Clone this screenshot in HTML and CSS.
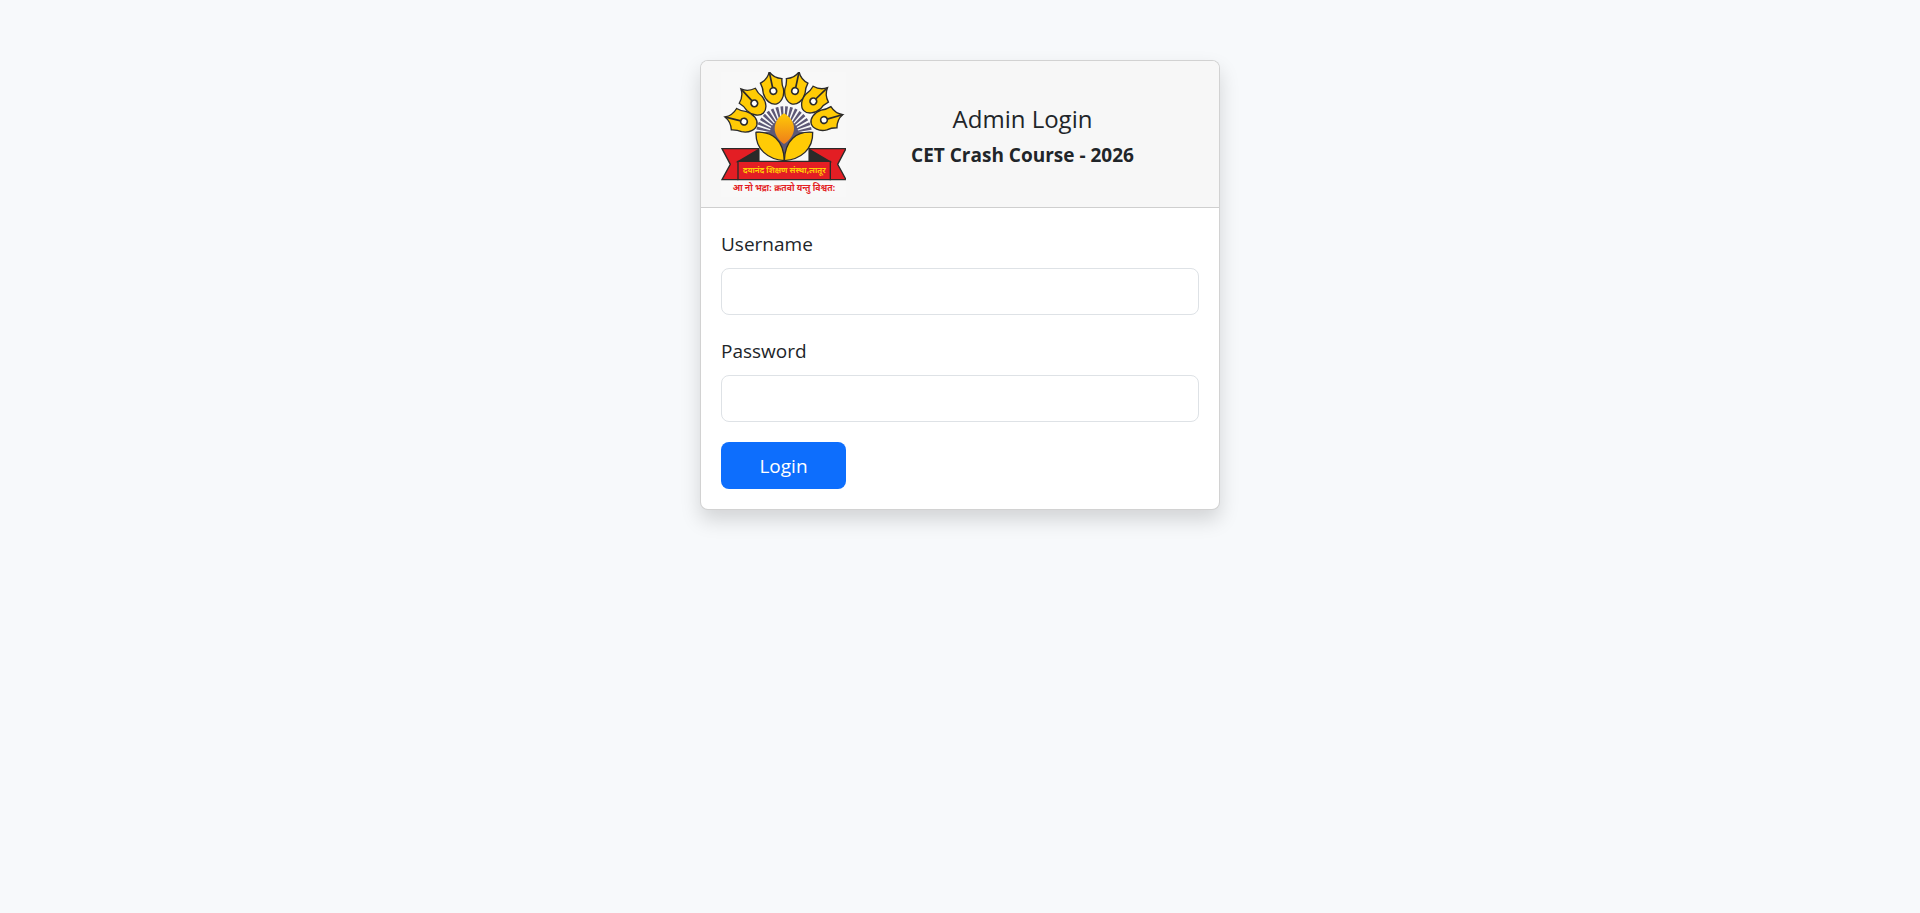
FILE: index.html
```
<!DOCTYPE html>
<html lang="en">
<head>
  <meta charset="UTF-8" />
  <meta name="viewport" content="width=device-width, initial-scale=1" />
  <title>Admin Login</title>
  <link rel="stylesheet" href="styles.css">
</head>
<body>
  <main class="login">
    <section class="card">
      <header class="card-header">
        <svg class="logo" viewBox="9 18 375 375" role="img" aria-label="Logo">
          <defs>
            <linearGradient id="flame" x1="0" y1="0" x2="0" y2="1">
              <stop offset="0" stop-color="#ffcb05" />
              <stop offset="1" stop-color="#ee7d1b" />
            </linearGradient>
            <g id="nib">
              <path d="M0-59Q-9-38-33-31Q-28-14-31 0C-30 24-14 40 0 40S30 24 31 0Q28-14 33-31Q9-38 0-59Z" fill="#ffcb05" stroke="#2b2a29" stroke-width="4" />
              <path d="M0-57V-10" stroke="#2b2a29" stroke-width="5" />
              <circle r="10" fill="#fff" stroke="#2b2a29" stroke-width="5" />
            </g>
          </defs>
          <rect x="9" y="18" width="375" height="375" fill="#f8f8f8" />
          <!-- rays -->
          <path d="M156 205A42 42 0 1 1 240 205" pathLength="200" fill="none" stroke="#5d5876" stroke-width="84" stroke-dasharray="6.6 4.77" />
          <circle cx="198" cy="203" r="43" fill="#5d5876" />
          <path d="M120 200Q198 190 278 200L240 230L199 284L160 230Z" fill="#5d5876" />
          <!-- pen nibs -->
          <use href="#nib" transform="translate(78 167) rotate(-76)" />
          <use href="#nib" transform="translate(109 112) rotate(-43)" />
          <use href="#nib" transform="translate(166 75) rotate(-12)" />
          <use href="#nib" transform="translate(231 75) rotate(12)" />
          <use href="#nib" transform="translate(286 106) rotate(46)" />
          <use href="#nib" transform="translate(318 162) rotate(74)" />
          <!-- leaves and flame -->
          <g fill="#ffcb05" stroke="#2b2a29" stroke-width="4">
            <path d="M114 199C162 195 197 222 199 284C150 280 112 250 114 199Z" />
            <path d="M284 199C236 195 201 222 199 284C248 280 286 250 284 199Z" />
          </g>
          <path d="M198 142C218 154 228 170 228 188C228 207 213 224 198 234C184 224 170 207 170 188C170 170 180 154 198 142Z" fill="url(#flame)" />
          <!-- ribbon -->
          <g stroke="#2b2a29" stroke-width="4">
            <path d="M12 248H122V287L60 341H12L37 295Z" fill="#e31e24" />
            <path d="M384 248H274V287L336 341H384L359 295Z" fill="#e31e24" />
            <path d="M122 250V287H60ZM274 250V287H336Z" fill="#2b2a29" />
            <path d="M60 286H337V341H60Z" fill="#e31e24" />
          </g>
          <text class="logo-name" x="199" y="320">दयानंद शिक्षण संस्था,लातूर</text>
          <text class="logo-motto" x="198" y="376">आ नो भद्रा: क्रतवो यन्तु विश्वत:</text>
        </svg>
        <div class="heading">
          <h1>Admin Login</h1>
          <p>CET Crash Course - 2026</p>
        </div>
      </header>
      <form class="card-body">
        <label for="username">Username</label>
        <input type="text" id="username" name="username" />
        <label for="password">Password</label>
        <input type="password" id="password" name="password" />
        <button type="submit">Login</button>
      </form>
    </section>
  </main>
</body>
</html>
```
FILE: styles.css
```
* {
  box-sizing: border-box;
}
body {
  margin: 0;
  background: #f7f9fb;
  color: #212529;
  font-family: "Open Sans", "Noto Sans", sans-serif;
  font-size: 19px;
  line-height: 32px;
}
.login {
  padding: 60px 20px;
}
.card {
  max-width: 520px;
  margin: 0 auto;
  background: #fff;
  border: 1px solid rgba(0,0,0,0.175);
  border-radius: 8px;
  box-shadow: 0 10px 20px rgba(0,0,0,0.15);
}
.card-header {
  display: flex;
  align-items: center;
  padding: 11px 20px 10px;
  background: #f7f7f7;
  border-bottom: 1px solid #cfcfcf;
  border-radius: 7px 7px 0 0;
}
.logo {
  width: 125px;
  height: 125px;
  flex: none;
}
.logo-name, .logo-motto {
  font-family: "Noto Sans Devanagari", "Noto Sans", sans-serif;
  font-weight: bold;
  text-anchor: middle;
}
.logo-name {
  fill: #ffcb05;
  font-size: 24px;
}
.logo-motto {
  fill: #e31e24;
  font-size: 26px;
}
.heading {
  flex: 1;
  padding-top: 4px;
  text-align: center;
}
h1 {
  margin: 0 0 4px;
  font-size: 24px;
  font-weight: normal;
  line-height: 32px;
}
.heading p {
  margin: 0;
  font-weight: bold;
}
.card-body {
  padding: 20px;
}
label {
  display: block;
  margin-bottom: 8px;
}
input {
  display: block;
  width: 100%;
  height: 47px;
  margin-bottom: 20px;
  padding: 8px 15px;
  border: 1px solid #dee2e6;
  border-radius: 8px;
  background: #fff;
  color: inherit;
  font: inherit;
}
button {
  display: block;
  width: 125px;
  height: 47px;
  padding: 0;
  border: none;
  border-radius: 8px;
  background: #0d6efd;
  color: #fff;
  font: inherit;
  cursor: pointer;
}
```
